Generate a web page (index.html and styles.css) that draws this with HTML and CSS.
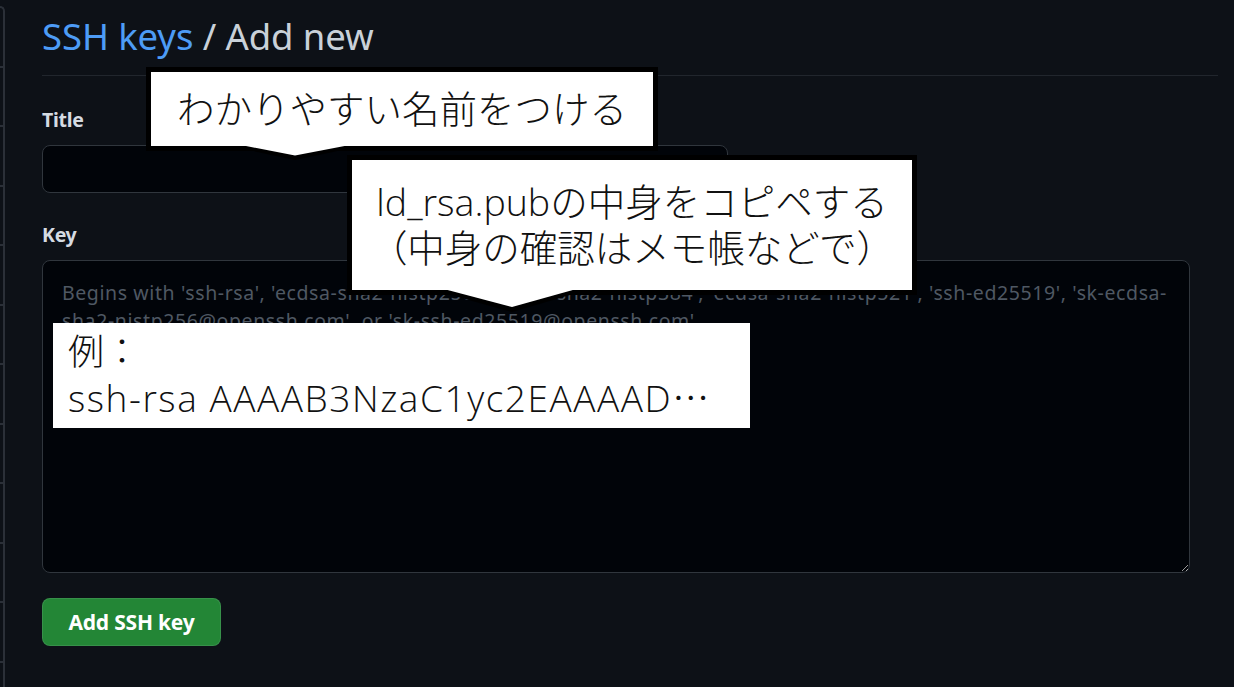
FILE: index.html
```html
<!DOCTYPE html>
<html lang="ja">
<head>
<meta charset="utf-8">
<title>SSH keys / Add new</title>
<link rel="stylesheet" href="styles.css">
</head>
<body>
  <div class="layout">
    <nav class="sidebar">
      <div class="nav-item"></div>
      <div class="nav-item"></div>
      <div class="nav-item"></div>
      <div class="nav-item"></div>
      <div class="nav-item"></div>
      <div class="nav-item"></div>
      <div class="nav-item"></div>
      <div class="nav-item"></div>
      <div class="nav-item"></div>
      <div class="nav-item"></div>
      <div class="nav-item"></div>
      <div class="nav-item"></div>
    </nav>
    <main class="content">
      <h2 class="page-title"><a class="crumb-link" href="#">SSH keys</a> / Add new</h2>
      <form class="key-form">
        <label class="field-label" for="title">Title</label>
        <input class="title-input" id="title" type="text">
        <label class="field-label" for="key">Key</label>
        <textarea class="key-input" id="key" placeholder="Begins with 'ssh-rsa', 'ecdsa-sha2-nistp256', 'ecdsa-sha2-nistp384', 'ecdsa-sha2-nistp521', 'ssh-ed25519', 'sk-ecdsa-&#10;sha2-nistp256@openssh.com', or 'sk-ssh-ed25519@openssh.com'"></textarea>
        <button class="btn-primary" type="button">Add SSH key</button>
      </form>
    </main>
  </div>

  <div class="callout callout-name">
    <span>わかりやすい名前をつける</span>
    <svg class="tail tail-name" width="136" height="24" viewBox="0 0 136 24">
      <polygon points="2,6 67,20 133,6" fill="#000"/>
      <polygon points="8,4 67,15.5 127,4" fill="#fff"/>
    </svg>
  </div>

  <div class="callout callout-key">
    <span>ld_rsa.pubの中身をコピペする</span>
    <span>（中身の確認はメモ帳などで）</span>
    <svg class="tail tail-key" width="160" height="30" viewBox="0 0 160 30">
      <polygon points="3,5 82,27 157,5" fill="#000"/>
      <polygon points="10,3 82,22 150,3" fill="#fff"/>
    </svg>
  </div>

  <div class="note">
    <span>例：</span>
    <span class="note-key">ssh-rsa AAAAB3NzaC1yc2EAAAAD<span class="ellipsis">…</span></span>
  </div>
</body>
</html>
```

FILE: styles.css
```css
html, body {
  margin: 0;
  padding: 0;
  height: 100%;
  overflow: hidden;
}

body {
  background: #0d1117;
  color: #c9d1d9;
  font-family: "Noto Sans", "Liberation Sans", sans-serif;
}

.layout {
  display: flex;
  align-items: flex-start;
  height: 100%;
}

.sidebar {
  flex: none;
  width: 3px;
  margin-top: 6px;
  height: calc(100vh - 6px);
  overflow: hidden;
  border-top: 2px solid #2b3038;
  border-right: 2px solid #2b3038;
  border-top-right-radius: 8px;
  display: flex;
  flex-direction: column;
}

.nav-item {
  flex: none;
  height: 57.5px;
  border-bottom: 2px solid #2b3038;
}

.content {
  flex: none;
  width: 1176px;
  margin-left: 37px;
}

.page-title {
  margin: 0;
  padding-top: 14px;
  padding-bottom: 17px;
  border-bottom: 1px solid #21262d;
  font-size: 36.5px;
  line-height: 44px;
  font-weight: 400;
  color: #c9d1d9;
  letter-spacing: -0.1px;
}

.crumb-link {
  color: #4d9cf6;
  text-decoration: none;
}

.key-form {
  display: flex;
  flex-direction: column;
  align-items: flex-start;
  padding-top: 31px;
}

.field-label {
  font-size: 19.5px;
  line-height: 26px;
  font-weight: 700;
  color: #d5dbe2;
  margin-bottom: 12px;
  letter-spacing: -0.3px;
}

.title-input {
  box-sizing: border-box;
  width: 686px;
  height: 48px;
  margin: 0 0 29px 0;
  background: #010409;
  border: 1px solid #30363d;
  border-radius: 8px;
  color: #c9d1d9;
  font: inherit;
  padding: 0 19px;
}

.key-input {
  box-sizing: border-box;
  width: 1148px;
  height: 313px;
  margin: 0 0 25px 0;
  background: #010409;
  border: 1px solid #30363d;
  border-radius: 8px;
  color: #c9d1d9;
  font-family: "Noto Sans", "Liberation Sans", sans-serif;
  font-size: 19.5px;
  letter-spacing: 0.6px;
  line-height: 28px;
  padding: 18px 19px;
  resize: vertical;
}

.key-input::placeholder {
  color: #4f5863;
  opacity: 1;
}

.btn-primary {
  box-sizing: border-box;
  width: 179px;
  height: 48px;
  background: #238636;
  border: 1px solid rgba(240, 246, 252, 0.1);
  border-radius: 8px;
  color: #ffffff;
  font-family: "Noto Sans", "Liberation Sans", sans-serif;
  font-size: 21px;
  font-weight: 700;
  letter-spacing: -0.2px;
  cursor: pointer;
}

/* Annotation callouts laid over the screenshot */
.callout {
  position: absolute;
  box-sizing: border-box;
  background: #fff;
  border: 5px solid #000;
  color: #111;
  font-family: "Open Sans", "Noto Sans CJK JP", sans-serif;
  font-weight: 300;
  display: flex;
  flex-direction: column;
  align-items: center;
  justify-content: center;
  z-index: 2;
}

.callout-name {
  left: 146px;
  top: 67px;
  width: 512px;
  height: 84px;
  font-size: 37.5px;
  line-height: 44px;
}

.callout-key {
  left: 347px;
  top: 155px;
  width: 570px;
  height: 140px;
  font-size: 37.5px;
  line-height: 46px;
}

.tail {
  position: absolute;
  display: block;
}

.tail-name {
  left: 77px;
  top: 68px;
}

.tail-key {
  left: 78px;
  top: 125px;
}

.note {
  position: absolute;
  left: 53px;
  top: 323px;
  width: 697px;
  height: 105px;
  box-sizing: border-box;
  padding: 7px 15px 0;
  background: #fff;
  color: #111;
  font-family: "Open Sans", "Noto Sans CJK JP", sans-serif;
  font-weight: 300;
  font-size: 36px;
  line-height: 44px;
  display: flex;
  flex-direction: column;
  z-index: 3;
}

.note-key {
  font-size: 37px;
  letter-spacing: 1.55px;
  white-space: nowrap;
}

.ellipsis {
  font-family: "Noto Sans CJK JP", sans-serif;
  letter-spacing: 0;
}
```
